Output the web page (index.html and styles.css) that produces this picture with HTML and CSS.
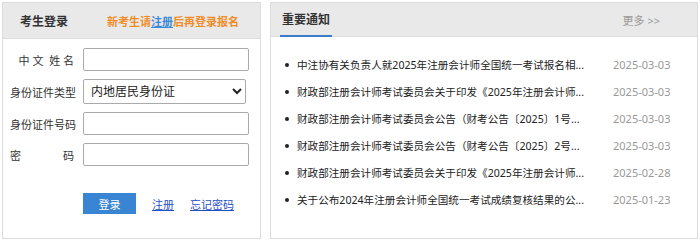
FILE: index.html
```html
<!DOCTYPE html>
<html lang="zh-CN">
  <head>
    <meta charset="UTF-8" />
    <meta name="viewport" content="width=device-width, initial-scale=1.0" />
    <title>考生登录</title>
    <link rel="stylesheet" href="styles.css">
  </head>
  <body>
    <div id="root">
      <div class="panel login-panel">
        <div class="panel-head">
          <span class="head-title">考生登录</span>
          <span class="head-tip">新考生请<a href="#">注册</a>后再登录报名</span>
        </div>
        <form class="login-form">
          <div class="form-row">
            <label class="form-label">中&nbsp;文&nbsp;&nbsp;姓&nbsp;名</label>
            <input class="form-input" type="text" />
          </div>
          <div class="form-row">
            <label class="form-label">身份证件类型</label>
            <select class="form-select">
              <option>内地居民身份证</option>
            </select>
          </div>
          <div class="form-row">
            <label class="form-label">身份证件号码</label>
            <input class="form-input" type="text" />
          </div>
          <div class="form-row">
            <label class="form-label label-split"><span>密</span><span>码</span></label>
            <input class="form-input" type="password" />
          </div>
          <div class="form-actions">
            <button class="btn-login" type="button">登录</button>
            <a class="form-link" href="#">注册</a>
            <a class="form-link" href="#">忘记密码</a>
          </div>
        </form>
      </div>
      <div class="panel notice-panel">
        <div class="panel-head notice-head">
          <span class="head-title notice-title">重要通知</span>
          <a class="more" href="#">更多 &gt;&gt;</a>
        </div>
        <ul class="notice-list">
          <li><span class="notice-text">中注协有关负责人就2025年注册会计师全国统一考试报名相...</span><span class="notice-date">2025-03-03</span></li>
          <li><span class="notice-text">财政部注册会计师考试委员会关于印发《2025年注册会计师...</span><span class="notice-date">2025-03-03</span></li>
          <li><span class="notice-text">财政部注册会计师考试委员会公告（财考公告〔2025〕1号...</span><span class="notice-date">2025-03-03</span></li>
          <li><span class="notice-text">财政部注册会计师考试委员会公告（财考公告〔2025〕2号...</span><span class="notice-date">2025-03-03</span></li>
          <li><span class="notice-text">财政部注册会计师考试委员会关于印发《2025年注册会计师...</span><span class="notice-date">2025-02-28</span></li>
          <li><span class="notice-text">关于公布2024年注册会计师全国统一考试成绩复核结果的公...</span><span class="notice-date">2025-01-23</span></li>
        </ul>
      </div>
    </div>
  </body>
</html>
```

FILE: styles.css
```css
* {
  margin: 0;
  padding: 0;
  box-sizing: border-box;
}
body {
  font-family: "Noto Sans", "Noto Sans CJK SC", sans-serif;
  font-size: 11px;
  color: #333;
  background-color: #fff;
}
ul {
  list-style-type: none;
}
#root {
  display: flex;
  gap: 9px;
  padding: 2px 2px 0 2px;
}
.panel {
  border: 1px solid #dcdcdc;
  background-color: #fff;
  height: 237px;
}
.login-panel {
  width: 259px;
}
.notice-panel {
  width: 428px;
}
.panel-head {
  display: flex;
  align-items: center;
  height: 36px;
  background-color: #e9e9e9;
  border-bottom: 1px solid #dcdcdc;
}
.head-title {
  font-size: 12px;
  font-weight: bold;
  color: #333;
  padding-left: 17px;
  width: 104px;
}
.head-tip {
  font-size: 11px;
  font-weight: bold;
  color: #f08c26;
}
.head-tip a {
  color: #3b8ad6;
}
.login-form {
  padding: 9px 0 0 7px;
}
.form-row {
  display: flex;
  align-items: center;
  margin-bottom: 8px;
}
.form-label {
  width: 64px;
  margin-right: 9px;
  text-align: right;
  font-size: 11px;
  color: #333;
  white-space: nowrap;
}
.label-split {
  display: flex;
  justify-content: space-between;
}
.form-input {
  width: 166px;
  height: 23px;
  border: 1px solid #aaa;
  border-radius: 2px;
  font-size: 12px;
  padding: 0 4px;
}
.form-select {
  width: 163px;
  height: 25px;
  border: 1px solid #aaa;
  border-radius: 2px;
  font-family: "Noto Sans", "Noto Sans CJK SC", sans-serif;
  font-size: 12px;
  color: #222;
  padding: 0 3px;
  background-color: #fff;
}
.form-actions {
  display: flex;
  align-items: center;
  padding: 19px 0 0 73px;
}
.btn-login {
  width: 53px;
  height: 21px;
  border: none;
  background-color: #3a84d4;
  color: #fff;
  font-family: "Noto Sans", "Noto Sans CJK SC", sans-serif;
  font-size: 11px;
  margin-right: 16px;
}
.form-link {
  color: #1f4fc7;
  font-size: 11px;
  margin-right: 16px;
}
.notice-head {
  justify-content: space-between;
  height: 34px;
  padding-right: 37px;
}
.notice-title {
  width: auto;
  margin-left: 9px;
  padding: 0 2px;
  height: 34px;
  line-height: 33px;
  border-bottom: 2px solid #3a7ccb;
}
.more {
  color: #999;
  font-size: 11px;
  text-decoration: none;
}
.notice-list {
  padding: 14px 0 0 14px;
}
.notice-list li {
  display: flex;
  align-items: center;
  height: 27px;
}
.notice-list li::before {
  content: "";
  width: 4px;
  height: 4px;
  border-radius: 50%;
  background-color: #222;
  margin-right: 8px;
}
.notice-text {
  width: 316px;
  white-space: nowrap;
  color: #222;
  font-size: 10.6px;
}
.notice-date {
  color: #999;
  font-size: 11px;
}
```
